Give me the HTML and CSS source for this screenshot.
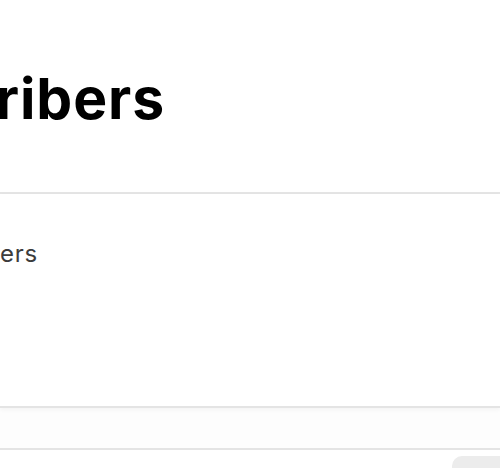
FILE: index.html
```html
<!DOCTYPE html>
<html lang="en">
<head>
<meta charset="utf-8">
<title>Subscribers</title>
<link rel="stylesheet" href="styles.css">
</head>
<body>
  <header class="page-header">
    <div class="title-clip">
      <h1 class="page-title">Subscribers</h1>
    </div>
  </header>
  <section class="summary">
    <div class="label-clip">
      <p class="summary-label">Subscribers</p>
    </div>
  </section>
  <div class="toolbar"></div>
  <div class="list">
    <div class="chip"></div>
  </div>
</body>
</html>
```

FILE: styles.css
```css
* { box-sizing: border-box; }
html, body {
  margin: 0;
  padding: 0;
  background: #ffffff;
  overflow: hidden;
  font-family: Inter, "Noto Sans", sans-serif;
}
.page-header {
  height: 194px;
  border-bottom: 2px solid #e4e4e4;
  padding-top: 70px;
}
.title-clip {
  display: flex;
  justify-content: flex-end;
  width: 165px;
}
.page-title {
  flex: none;
  margin: 0;
  font-size: 57px;
  line-height: 1;
  font-weight: 700;
  letter-spacing: 0.9px;
  color: #000000;
  white-space: nowrap;
}
.summary {
  height: 214px;
  border-bottom: 2px solid #e4e4e4;
  padding-top: 48px;
  position: relative;
  z-index: 1;
  box-shadow: 0 2px 4px rgba(0,0,0,0.04);
  background: #ffffff;
}
.label-clip {
  display: flex;
  justify-content: flex-end;
  width: 38px;
}
.summary-label {
  flex: none;
  margin: 0;
  font-size: 24px;
  line-height: 1;
  font-weight: 400;
  letter-spacing: 0.8px;
  color: #3c3c3c;
  white-space: nowrap;
}
.toolbar {
  height: 42px;
  background: #fdfdfd;
  border-bottom: 2px solid #e4e4e4;
}
.list {
  display: flex;
  justify-content: flex-end;
  padding-top: 6px;
  background: #ffffff;
  height: 40px;
}
.chip {
  width: 60px;
  height: 34px;
  margin-right: -12px;
  background: #ececec;
  border-radius: 10px;
}
```
